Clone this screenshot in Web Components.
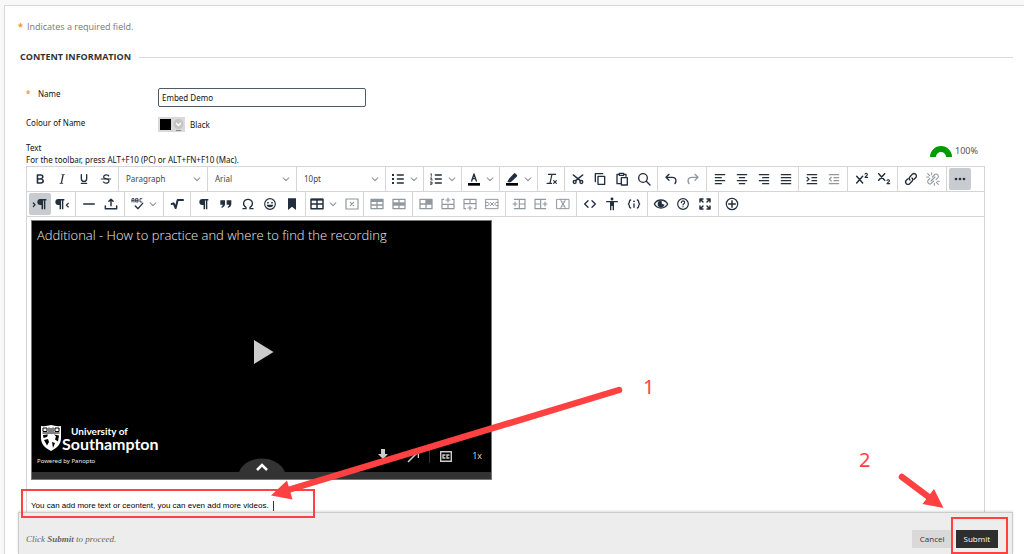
<!DOCTYPE html>
<html lang="en">
<head>
<meta charset="utf-8">
<title>Edit item</title>
<style>
  html, body { height: 100%; }
  body { margin: 0; background: #f8f8f8; color: #333; font: 8px/12px "Noto Sans", "Open Sans", sans-serif; overflow: hidden; }
</style>
</head>
<body>
<content-page></content-page>
<script>
const S = (d, w = 2) => `<path d="${d}" fill="none" stroke="currentColor" stroke-width="${w}" stroke-linecap="round" stroke-linejoin="round"/>`;
const F = d => `<path d="${d}" fill="currentColor" fill-rule="evenodd"/>`;
const PILCROW = 'M10.500 4.500h9v2.200h-1.500v13h-2.200v-13h-1.300v13h-2.200v-6.200h-1.800a4.500 4.500 0 0 1 0-9z';
const CHEVRON = S('M5 9l7 7 7-7', 2.500);
const GRID = 'M3 5h18v14H3z';
const ICONS = {
  bold: F('M7.8 19c-.3 0-.5 0-.6-.2l-.2-.5V5.7c0-.2 0-.4.2-.5l.6-.2h5c1.5 0 2.7.3 3.5 1 .7.6 1.1 1.4 1.1 2.5a3 3 0 0 1-.6 1.9c-.4.6-1 1-1.6 1.2.4.1.9.3 1.3.6s.8.7 1 1.2c.4.4.5 1 .5 1.6 0 1.3-.4 2.3-1.3 3-.8.7-2.1 1-3.8 1H7.8zm5-8.3c.6 0 1.2-.1 1.6-.5.4-.3.6-.7.6-1.3 0-1.1-.8-1.7-2.3-1.7H9.3v3.5h3.4zm.5 6c.7 0 1.3-.1 1.7-.4.4-.4.6-.9.6-1.5s-.2-1-.7-1.4c-.4-.3-1-.4-2-.4H9.4v3.8h4z'),
  italic: F('M16.7 4.7l-.1.9h-.3c-.6 0-1 0-1.4.3-.3.3-.4.6-.5 1.1l-2.1 9.8v.6c0 .5.4.8 1.4.8h.2l-.2.8H8l.2-.8h.2c1.1 0 1.8-.5 2-1.5l2-9.8.1-.5c0-.6-.4-.8-1.4-.8h-.3l.2-.9h5.8z'),
  underline: S('M8 5.500v6a4 4 0 0 0 8 0v-6M8 18.500h8'),
  strike: S('M5 12h14', 1.8) + F('M15.600 8.500c-.5-.7-1-1.100-1.300-1.300-.6-.4-1.300-.6-2-.6-2.700 0-2.800 1.700-2.800 2.100 0 1.600 1.800 2 3.200 2.300 4.400.9 4.600 2.800 4.600 3.900 0 1.400-.7 4.100-5 4.100A6.200 6.200 0 0 1 7 16.400l1.500-1.100c.4.6 1.600 2 3.700 2 1.600 0 2.500-.4 3-1.200.4-.8.3-2-.8-2.600-.7-.4-1.600-.7-2.900-1-1-.2-3.900-.8-3.900-3.600C7.600 6 10.300 5 12.400 5c2.900 0 4.200 1.600 4.700 2.400z'),
  chevron: CHEVRON,
  ul: S('M11 6h9M11 12h9M11 18h9') + F('M3 4.500h3v3H3zM3 10.500h3v3H3zM3 16.500h3v3H3z'),
  ol: S('M11 6h9M11 12h9M11 18h9') + S('M4 4.500l1-.5v4M3.500 10.500h2.500L4 13.500h2.500M3.500 16.500h2.500v3.500H3.500M4 18.200h2', 1.200),
  textcolor: S('M8.500 15L12 4.500 15.500 15M9.700 11.500h4.600', 2) + '<path d="M3 18h18v4H3z" fill="#000"/>',
  highlight: F('M5 16.500l2.500-5 7-7.500a2 2 0 0 1 3 0l1.500 1.500a2 2 0 0 1 0 3l-8 7.500c-2 1-4 1-6 .5z') + '<path d="M3 18h18v4H3z" fill="#000"/>',
  clear: S('M8 5h11M13.500 5L10.500 18M6 18.500h7M16 14.500l4 4M20 14.500l-4 4', 1.700),
  cut: S('M5 6l10 8M19 6L9 14', 2.400) + '<circle cx="7" cy="16.500" r="2.200" fill="none" stroke="currentColor" stroke-width="2"/><circle cx="17" cy="16.500" r="2.200" fill="none" stroke="currentColor" stroke-width="2"/>',
  copy: S('M9 8h10v12H9zM5 16V4h11', 2),
  paste: S('M8 5H4.500v14H10M14.500 5H18v3M8 3.500h6.500v3H8zM11 10h9v11h-9z', 2),
  search: '<circle cx="10.500" cy="10.500" r="6.500" fill="none" stroke="currentColor" stroke-width="2"/>' + S('M15.500 15.500l5.500 5.500'),
  undo: S('M9 5L4.500 9.500 9 14M5 9.500h9c6 0 6.500 5 4 9.500'),
  redo: S('M15 5l4.500 4.500L15 14M19 9.500h-9c-6 0-6.500 5-4 9.500'),
  left: S('M5 5.500h14M5 10h9M5 14.500h14M5 19h9', 1.900),
  center: S('M5 5.500h14M8 10h8M5 14.500h14M8 19h8', 1.900),
  right: S('M5 5.500h14M10 10h9M5 14.500h14M10 19h9', 1.900),
  justify: S('M5 5.500h14M5 10h14M5 14.500h14M5 19h14', 1.900),
  indent: S('M5 5.500h14M12 10h7M12 14.500h7M5 19h14M4.500 9.500l3 2.700-3 2.700', 1.900),
  outdent: S('M5 5.500h14M12 10h7M12 14.500h7M5 19h14M8 9.500l-3 2.700 3 2.700', 1.900),
  sup: S('M4 8l9 10M13 8L4 18', 2.200) + S('M16.500 4.500c1-1.500 4-1 3.500 1 0 1-3 2.500-3.500 4H20.500', 1.700),
  sub: S('M4 4l9 10M13 4L4 14', 2.200) + S('M16.500 14c1-1.500 4-1 3.500 1 0 1-3 2.500-3.500 4H20.500', 1.700),
  link: S('M10.500 13.500a3.500 3.500 0 0 1 0-5l3.500-3.500a3.500 3.500 0 0 1 5 5l-2.500 2.500M13.500 10.500a3.500 3.500 0 0 1 0 5L10 19a3.500 3.500 0 0 1-5-5l2.500-2.500'),
  unlink: S('M11 9l4-4a3.500 3.500 0 0 1 4.500 5l-3 3M13 15l-4 4a3.500 3.500 0 0 1-4.500-5l3-3M9 15l6-6M4 4l3 3M10 2.500v3M2.500 9h3M20 20l-3-3M14 21.500v-3M21.500 15.500h-3', 1.600),
  more: '<circle cx="6" cy="12" r="2" fill="currentColor"/><circle cx="12" cy="12" r="2" fill="currentColor"/><circle cx="18" cy="12" r="2" fill="currentColor"/>',
  ltr: `<g transform="translate(2 0)">${F(PILCROW)}</g>` + S('M2 10.500l2.500 2.700-2.500 2.700', 1.900),
  rtl: `<g transform="translate(-4 0)">${F(PILCROW)}</g>` + S('M21.500 11l-3 2.700 3 2.700', 1.900),
  hr: S('M4 12h16', 2),
  upload: S('M3.500 15v4h17v-4M12 14.500V5M8.800 8L12 4.800 15.200 8', 2.200),
  spell: S('M3 9V4h3v5M3 7h3M9 4h3v5H9zM9 6.500h3M18 4h-3v5h3', 1.300) + S('M8 15l4 4 7-8', 2),
  math: S('M4 12l3-1 3 7 3-12h8', 3),
  pilcrow: `<g transform="translate(-1 0)">${F(PILCROW)}</g>`,
  quote: F('M3.500 6.500h7V12c0 3-2 5-5 6l-.5-2c1.500-.7 2-1.500 2-3H3.500zM13 6.500h7V12c0 3-2 5-5 6l-.5-2c1.500-.7 2-1.500 2-3H13z'),
  omega: S('M4.500 19H9v-2C3 13.500 5 5 12 5s9 8.500 3 12v2h4.500', 2),
  smile: '<circle cx="12" cy="12" r="8" fill="none" stroke="currentColor" stroke-width="1.700"/><circle cx="9" cy="10" r="1.300" fill="currentColor"/><circle cx="15" cy="10" r="1.300" fill="currentColor"/>' + F('M7 13h10c-.5 5-9.500 5-10 0z'),
  bookmark: F('M6 3.500h12V21l-6-5-6 5z'),
  table: S(GRID + 'M3 12h18M12 5v14', 2.200) + F('M3 4h18v3H3z'),
  tabledel: S('M3 4.500h18v15H3zM9.500 9.500l5 5M14.500 9.500l-5 5', 1.800),
  trow: S(GRID + 'M3 13.500h18M12 9v10', 1.900) + F('M3 5h18v4H3z'),
  tmid: S(GRID + 'M12 5v14', 1.900) + F('M3 9.500h18v5H3z'),
  tcell: S(GRID + 'M3 12h18M12 5v14', 1.900) + F('M12 5h9v7h-9z'),
  rowup: S('M3 5v14h18V5M3 12.500h18M12 12.500V19M12 3v6M9 6h6M3 5h2.500M18.500 5H21', 1.700),
  rowdown: S('M3 19V5h18v14M3 11.500h18M12 5v6.500M12 15v6M9 18h6M3 19h2.500M18.500 19H21', 1.700),
  rowdel: S('M3 5h18v14H3zM9.500 9.500l5 5M14.500 9.500l-5 5M3 9.500h3l2 2.500-2 2.500H3M21 9.500h-3L16 12l2 2.500h3', 1.500),
  colleft: S('M5 5h16v14H5M12.500 5v14M12.500 12H21M3 12h6M6 9v6', 1.700),
  colright: S('M19 5H3v14h16M11.500 5v14M3 12h8.500M15 12h6M18 9v6', 1.700),
  coldel: S('M3 5h18v14H3zM10 10l4 4M14 10l-4 4M9 5v3l3 1.500L15 8V5M9 19v-3l3-1.500 3 1.500v3', 1.500),
  code: S('M9 7l-5 5 5 5M15 7l5 5-5 5', 2),
  person: '<circle cx="12" cy="4.500" r="2.200" fill="currentColor"/>' + S('M4 8.500h16', 2) + F('M9 8h6v13.500h-2V15h-2v6.500H9z'),
  braces: S('M7 6c-3 0-1 5-3.500 6C6 13 4 18 7 18M17 6c3 0 1 5 3.500 6-2.500 1-.5 6-3.500 6M12 12v5', 2) + '<circle cx="12" cy="8" r="1.400" fill="currentColor"/>',
  eye: S('M2 12c4.500-8 15.500-8 20 0-4.500 8-15.500 8-20 0z', 2) + F('M12 7a5 5 0 1 0 5 5 2.500 2.500 0 0 1-3.500-3.500A5 5 0 0 0 12 7z'),
  help: '<circle cx="12" cy="12" r="8" fill="none" stroke="currentColor" stroke-width="1.800"/>' + S('M9.500 10c0-3.500 5-3.500 5-.5 0 2-2.500 2-2.500 4M12 16v.2', 1.800),
  full: S('M4.500 9V4.500H9M15 4.500h4.500V9M19.500 15v4.500H15M9 19.500H4.500V15M5 5l4 4M19 5l-4 4M19 19l-4-4M5 19l4-4', 2.200),
  plus: '<circle cx="12" cy="12" r="8.500" fill="none" stroke="currentColor" stroke-width="1.800"/>' + S('M12 7v10M7 12h10', 2.200)
};
const svg = (name, size = 16) => `<svg width="${size}" height="${size}" viewBox="0 0 24 24" aria-hidden="true">${ICONS[name]}</svg>`;

function define(tag, html, init) {
  const template = document.createElement('template');
  template.innerHTML = html;
  customElements.define(tag, class extends HTMLElement {
    connectedCallback() {
      if (this.shadowRoot) return;
      this.attachShadow({ mode: 'open' }).append(template.content.cloneNode(true));
      if (init) init.call(this, this.shadowRoot);
    }
  });
}

define('tool-button', `
<style>
  :host { display: block; flex: 0 0 22px; }
  :host([drop]) { flex-basis: 34px; }
  button { all: unset; box-sizing: border-box; width: 100%; height: 22px; display: flex; align-items: center; justify-content: space-evenly; color: #222f3e; border-radius: 2px; }
  :host([on]) button { background: #c8cbcf; }
  :host([off]) button { color: #90979e; }
  .arrow { display: flex; color: #858c94; }
  svg { display: block; flex: none; }
</style><button type="button"></button>`, function (root) {
  const b = root.querySelector('button'), name = this.getAttribute('icon');
  b.setAttribute('aria-label', name);
  b.innerHTML = svg(name) + (this.hasAttribute('drop') ? `<span class="arrow">${svg('chevron', 10)}</span>` : '');
  b.disabled = this.hasAttribute('off');
});

define('tool-select', `
<style>
  :host { display: flex; align-items: center; flex: 1; padding: 0 5px 0 7px; }
  select { appearance: none; flex: 1; min-width: 0; border: 0; padding: 0; margin: 0; background: none; color: #3b4652; font: 8px/14px "Noto Sans", sans-serif; outline: 0; }
  svg { color: #858c94; flex: none; }
</style><select><option></option></select>${svg('chevron', 10)}`, function (root) {
  const s = root.querySelector('select');
  s.setAttribute('aria-label', this.getAttribute('label'));
  s.options[0].textContent = this.getAttribute('value');
});

define('tool-group', `
<style>
  :host { display: flex; align-items: center; justify-content: center; box-sizing: border-box; border-right: 1px solid #d5d5d5; }
  :host(:last-child) { border-right: 0; justify-content: flex-start; padding-left: 2px; }
</style><slot></slot>`);

const ROWS = [
  ['bold italic underline strike', 'Block format=Paragraph', 'Font=Arial', 'Font size=10pt', 'ul+', 'ol+', 'textcolor+', 'highlight+', 'clear', 'cut copy paste search', 'undo redo-', 'left center right justify', 'indent outdent-', 'sup sub', 'link unlink-', 'more*'],
  ['ltr* rtl', 'hr upload', 'spell+', 'math', 'pilcrow quote omega smile bookmark', 'table+ tabledel-', 'trow- tmid-', 'tcell- rowup- rowdown- rowdel-', 'colleft- colright- coldel-', 'code person braces', 'eye help full', 'plus']
];
define('editor-toolbar', `
<style>
  :host { display: block; }
  .row { display: grid; height: 25px; box-sizing: border-box; border-bottom: 1px solid #d5d5d5; }
  .row:nth-of-type(1) { grid-template-columns: 92px 89px 89px 89px 38px 38px 38px 38px 27px 93px 49px 92px 49px 50px 49px 1fr; }
  .row:nth-of-type(2) { grid-template-columns: 49px 49px 39px 27px 115px 58px 49px 93px 71px 71px 71px 1fr; }
</style><div class="row"></div><div class="row"></div>`, function (root) {
  const flags = { '+': 'drop', '-': 'off', '*': 'on' };
  root.querySelectorAll('.row').forEach((row, i) => {
    row.innerHTML = ROWS[i].map(g => {
      if (g.includes('=')) {
        const [label, value] = g.split('=');
        return `<tool-group><tool-select label="${label}" value="${value}"></tool-select></tool-group>`;
      }
      return `<tool-group>${g.split(' ').map(t => `<tool-button icon="${t.replace(/[-+*]$/, '')}" ${flags[t.slice(-1)] || ''}></tool-button>`).join('')}</tool-group>`;
    }).join('');
  });
});

define('video-player', `
<style>
  :host { display: flex; flex-direction: column; width: 461px; height: 260px; box-sizing: border-box; border: 1px solid #777; background: #000; color: #ddd; position: relative; }
  h2 { margin: 0; padding: 4px 5px; font: 300 13px/20px "Open Sans", sans-serif; color: #eee; }
  .stage { flex: 1; display: flex; align-items: center; justify-content: center; padding: 30px 0 0 4px; }
  .play { all: unset; display: flex; }
  .foot { display: flex; justify-content: space-between; align-items: flex-end; padding: 0 9px 4px 5px; }
  .brand { display: flex; align-items: flex-start; gap: 1px; padding: 0 4px 5px; color: #fff; }
  .brand span { display: block; font: 700 10px/12px Lato, sans-serif; padding-left: 9px; }
  .brand b { display: block; font: 700 16px/14px Lato, sans-serif; }
  small { display: block; font: 6px/10px "Noto Sans", sans-serif; padding: 0 0 2px; color: #eee; }
  .controls { display: flex; align-items: center; gap: 10px; height: 24px; }
  .controls button { all: unset; display: flex; font: 9px/14px "Open Sans", sans-serif; }
  .controls .speed { padding-left: 10px; }
  .bar { height: 7px; background: #333; flex: none; }
  .tab { all: unset; position: absolute; bottom: 0; left: 207px; width: 46px; height: 21px; display: flex; }
</style>
<h2>Additional - How to practice and where to find the recording</h2>
<div class="stage"><button class="play" aria-label="Play"><svg width="20" height="24"><path d="M0 0l19.500 12L0 24z" fill="#ccc"/></svg></button></div>
<div class="foot">
  <div>
    <div class="brand">
      <svg width="20" height="26" viewBox="0 0 20 26"><path d="M0 1q5 .5 10-1 5 1.500 10 1v12c0 6-4 10-10 13C4 23 0 19 0 13z" fill="#fff"/><path d="M1.500 8h17M2 3h4v3.500H2zM14 3h4v3.500h-4zM8 2.500v4.500M12 2.500v4.500M10 3v4" stroke="#000" stroke-width="1" fill="none"/><path d="M2 10l5-.5L6 12l-3.500 1zM13 9.500l5 1-1 6-3-2 1-3zM3 15l4-1 1 3-2 3.500zM11 17l3 1-2 5z" fill="#000"/></svg>
      <div><span>University of</span><b>Southampton</b></div>
    </div>
    <small>Powered by Panopto</small>
  </div>
  <div class="controls">
    <button aria-label="Download"><svg width="12" height="14"><path d="M4 0h4v5h3L6 10 1 5h3zM1 12h10v1H1z" fill="#ccc"/></svg></button>
    <button aria-label="Open in new window"><svg width="20" height="14"><path d="M9 13L19 3M13 2.500h6.500V9" stroke="#ccc" stroke-width="1.500" fill="none"/></svg></button>
    <svg width="1" height="14"><path d="M0 0h1v14H0z" fill="#333"/></svg>
    <button aria-label="Captions"><svg width="12" height="11"><path d="M.7.700h10.600v9.600H.7zM5.500 4H3v3h2.500M9.500 4H7v3h2.500" stroke="#ccc" stroke-width="1.400" fill="none"/></svg></button>
    <button class="speed">1x</button>
  </div>
</div>
<div class="bar"></div>
<button class="tab" aria-label="Show thumbnails"><svg width="46" height="21"><path d="M0 14C8-4 38-4 46 14v7H0z" fill="#333"/><path d="M18 12l5-5 5 5" stroke="#fff" stroke-width="2.500" fill="none"/></svg></button>`);

define('rich-editor', `
<style>
  :host { display: flex; flex-direction: column; border: 1px solid #d5d5d5; border-bottom: 0; background: #fff; overflow: hidden; }
  .body { padding: 3px 4px; color: #000; font: 8px/12px "Liberation Sans", Arial, sans-serif; outline: 0; }
  p { margin: 20px 0 0; display: flex; align-items: center; gap: 4px; }
  i { width: 1px; height: 10px; background: #333; }
</style>
<editor-toolbar></editor-toolbar>
<div class="body"><video-player></video-player><p>You can add more text or ceontent, you can even add more videos.<i></i></p></div>`);

define('submit-bar', `
<style>
  :host { display: flex; align-items: center; justify-content: space-between; box-sizing: border-box; height: 42px; flex: none; padding: 10px 14px 0 7px; background: #ededed; border: 1px solid #ccc; border-bottom: 0; box-shadow: 0 -1px 2px #0002; }
  p { margin: 0; color: #666; font: italic 9px/14px "Liberation Serif", serif; }
  div { display: flex; gap: 3px; }
  button { margin: 0; border: 0; padding: 0 8px; height: 18px; font: 8px/18px "Open Sans", sans-serif; background: #d9d9d9; color: #333; }
  .go { background: #2e2e2e; color: #fff; }
</style>
<p>Click <b>Submit</b> to proceed.</p><div><button type="button">Cancel</button><button class="go" type="submit">Submit</button></div>`);

define('callout-marks', `
<style>
  :host { display: block; position: absolute; inset: 0; pointer-events: none; color: #ff4141; font: 20px/20px "Noto Sans", sans-serif; }
  svg { position: absolute; left: 0; top: 0; }
  span { position: absolute; }
  .one { left: 643px; top: 377px; }
  .two { left: 859px; top: 450px; }
</style>
<svg width="1024" height="554" fill="none" stroke="#ff4141">
  <path d="M22 490h292v27H22zM952 518h55v35h-55z" stroke-width="2"/>
  <path d="M619 390L288 490M902 477l28 21" stroke-width="6.500" stroke-linecap="round"/>
  <path d="M271 495.500l16-15 5.500 19zM943.500 508l-9.500-19-11.500 15z" fill="#ff4141" stroke="none"/>
</svg>
<span class="one">1</span><span class="two">2</span>`);

define('content-page', `
<style>
  :host { display: block; height: 100%; box-sizing: border-box; padding: 5px 0 0 4px; }
  main { height: 100%; box-sizing: border-box; display: flex; flex-direction: column; background: #fff; border: solid #d9d9d9; border-width: 1px 0 0 1px; padding: 15px 11px 0 13px; }
  .req { margin: 0; color: #777; display: flex; gap: 4px; font: 9px/12px "Open Sans", sans-serif; }
  .star { color: #f7941d; font-weight: bold; }
  h1 { margin: 18px 0 25px; padding-left: 2px; display: flex; align-items: center; gap: 8px; font: bold 9px/12px "Open Sans", sans-serif; color: #333; }
  h1::after { content: ""; flex: 1; height: 1px; background: #d9d9d9; }
  .form { display: grid; grid-template-columns: 132px 1fr; row-gap: 10px; padding-left: 8px; color: #111; }
  .form .star { display: inline-block; width: 12px; }
  input { box-sizing: border-box; width: 208px; height: 19px; border: 1px solid #4d5a68; border-radius: 2px; padding: 0 3px; font: inherit; color: #111; background: #fff; justify-self: start; }
  .colour { display: flex; align-items: center; gap: 5px; height: 15px; }
  .colour button { all: unset; width: 27px; height: 15px; background: #d9d9d9; display: flex; align-items: center; gap: 2px; }
  .colour i { width: 11px; height: 11px; background: #000; margin-left: 2px; }
  .text { display: flex; justify-content: space-between; align-items: flex-start; margin: 10px 0 0; padding: 0 35px 0 8px; color: #111; }
  .meter { display: flex; align-items: center; gap: 3px; color: #555; padding-top: 2px; font-size: 9px; }
  rich-editor { flex: 1; min-height: 0; margin: 0 28px 0 8px; }
</style>
<main>
  <p class="req"><span class="star">*</span>Indicates a required field.</p>
  <h1>CONTENT INFORMATION</h1>
  <div class="form">
    <label for="name"><span class="star">*</span>Name</label><input id="name" value="Embed Demo">
    <label for="colour">Colour of Name</label>
    <div class="colour"><button id="colour" type="button"><i></i><svg width="11" height="13"><circle cx="5.500" cy="6" r="5" fill="#c4c4c4"/><path d="M3 5l2.500 2.500L8 5" stroke="#fff" stroke-width="1.300" fill="none"/><path d="M3 12.500h5" stroke="#888"/></svg></button>Black</div>
  </div>
  <div class="text"><div>Text<br>For the toolbar, press ALT+F10 (PC) or ALT+FN+F10 (Mac).</div>
    <div class="meter"><svg width="22" height="13"><path d="M0 13a11 11 0 0 1 22 0h-6a5 5 0 0 0-10 0z" fill="#009b00"/></svg>100%</div></div>
  <rich-editor></rich-editor>
  <submit-bar></submit-bar>
</main>
<callout-marks></callout-marks>`);
</script>
</body>
</html>
